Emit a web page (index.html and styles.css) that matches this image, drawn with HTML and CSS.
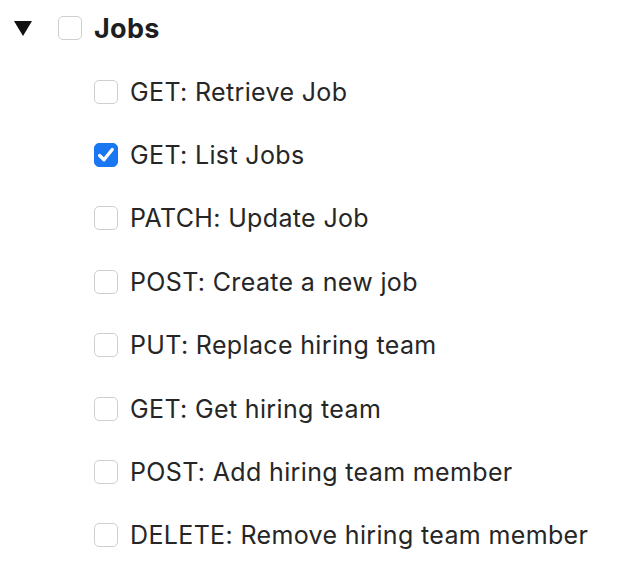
FILE: index.html
```html
<!DOCTYPE html>
<html>
<head>
<meta charset="utf-8">
<link rel="stylesheet" href="styles.css">
</head>
<body>
<div class="tree">
  <div class="group-row">
    <span class="caret"></span>
    <span class="box"></span>
    <span class="group-label">Jobs</span>
  </div>
  <ul class="items">
    <li class="item"><span class="box"></span><span class="label">GET: Retrieve Job</span></li>
    <li class="item"><span class="box checked"><svg viewBox="0 0 24 24" width="24" height="24"><path d="M5 12.5 L9.8 17.2 L18.8 6" fill="none" stroke="#fff" stroke-width="3.6" stroke-linecap="round" stroke-linejoin="round"/></svg></span><span class="label">GET: List Jobs</span></li>
    <li class="item"><span class="box"></span><span class="label">PATCH: Update Job</span></li>
    <li class="item"><span class="box"></span><span class="label">POST: Create a new job</span></li>
    <li class="item"><span class="box"></span><span class="label">PUT: Replace hiring team</span></li>
    <li class="item"><span class="box"></span><span class="label">GET: Get hiring team</span></li>
    <li class="item"><span class="box"></span><span class="label">POST: Add hiring team member</span></li>
    <li class="item"><span class="box"></span><span class="label">DELETE: Remove hiring team member</span></li>
  </ul>
</div>
</body>
</html>
```
FILE: styles.css
```css
html, body { margin: 0; padding: 0; background: #fff; }
body { font-family: Inter, "Noto Sans", sans-serif; color: #262626; }
.tree { padding-left: 14px; }
.group-row { display: flex; align-items: center; height: 56px; }
.caret {
  width: 0; height: 0;
  border-left: 9px solid transparent;
  border-right: 9px solid transparent;
  border-top: 15px solid #111;
  margin-right: 26px;
}
.box {
  box-sizing: border-box;
  width: 24px; height: 24px;
  border: 1px solid #cfcfcf;
  border-radius: 5px;
  background: #fff;
  flex: none;
  display: flex; align-items: center; justify-content: center;
}
.box.checked { background: #1a77f2; border-color: #1a77f2; }
.group-label { margin-left: 12px; font-weight: 700; font-size: 27px; letter-spacing: 0.3px; color: #1e1e1e; }
.items { list-style: none; margin: 4px 0 0 0; padding: 0 0 0 80px; }
.item { display: flex; align-items: center; height: 63.4px; }
.label { margin-left: 12px; font-size: 25px; letter-spacing: 0.35px; }
```
